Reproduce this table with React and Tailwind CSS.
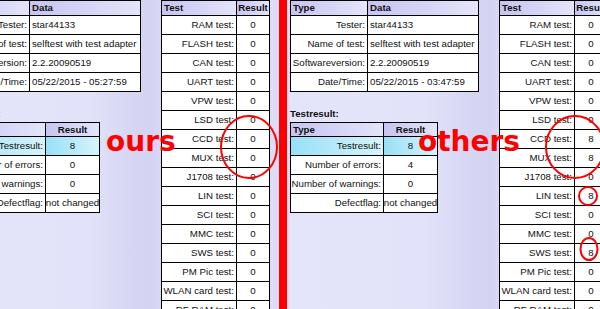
import clsx from "clsx";

const TESTS = [
  "RAM test:",
  "FLASH test:",
  "CAN test:",
  "UART test:",
  "VPW test:",
  "LSD test:",
  "CCD test:",
  "MUX test:",
  "J1708 test:",
  "LIN test:",
  "SCI test:",
  "MMC test:",
  "SWS test:",
  "PM Pic test:",
  "WLAN card test:",
  "RF RAM test:",
];

const ours = {
  time: "05/22/2015 - 05:27:59",
  errors: "0",
  results: TESTS.map(() => "0"),
};

const others = {
  time: "05/22/2015 - 03:47:59",
  errors: "4",
  results: ["0", "0", "0", "0", "0", "0", "8", "8", "0", "8", "0", "0", "8", "0", "0", "0"],
};

const head = "bg-[linear-gradient(90deg,#c7c4f0,#e4e4fb)] font-bold";
const cyan = "bg-[linear-gradient(90deg,#98e0f6,#d6f4fc)]";

function Cell({ className, children }) {
  return (
    <div
      className={clsx(
        "flex h-full shrink-0 items-center overflow-hidden whitespace-nowrap border-r border-black",
        className,
      )}
    >
      {children}
    </div>
  );
}

function Row({ tall, children }) {
  return (
    <div className={clsx("flex border-b border-black", tall ? "h-[19px]" : "h-[15px]")}>
      {children}
    </div>
  );
}

function InfoTable({ time }) {
  const rows = [
    ["Tester:", "star44133"],
    ["Name of test:", "selftest with test adapter"],
    ["Softwareversion:", "2.2.20090519"],
    ["Date/Time:", time],
  ];
  return (
    <div className="w-max border-l border-t border-black bg-white">
      <Row>
        <Cell className={clsx("w-[77px] pl-[2px]", head)}>Type</Cell>
        <Cell className={clsx("w-[111px] pl-[2px]", head)}>Data</Cell>
      </Row>
      {rows.map(([k, v]) => (
        <Row tall key={k}>
          <Cell className="w-[77px] justify-end pr-[2px]">{k}</Cell>
          <Cell className="w-[111px] pl-[2px]">{v}</Cell>
        </Row>
      ))}
    </div>
  );
}

function ResultTable({ errors }) {
  const rows = [
    ["Number of errors:", errors],
    ["Number of warnings:", "0"],
    ["Defectflag:", "not changed"],
  ];
  return (
    <div className="mt-[2px] w-max border-l border-t border-black bg-white">
      <div className="flex h-[14px] border-b border-black">
        <Cell className={clsx("w-[93px] pl-[2px]", head)}>Type</Cell>
        <Cell className={clsx("w-[54px] justify-center", head)}>Result</Cell>
      </div>
      <Row tall>
        <Cell className={clsx("w-[93px] justify-end pr-[2px]", cyan)}>Testresult:</Cell>
        <Cell className={clsx("w-[54px] justify-center", cyan)}>8</Cell>
      </Row>
      {rows.map(([k, v]) => (
        <Row tall key={k}>
          <Cell className="w-[93px] justify-end pr-[2px]">{k}</Cell>
          <Cell className="w-[54px] justify-center">{v}</Cell>
        </Row>
      ))}
    </div>
  );
}

function TestTable({ results }) {
  return (
    <div className="w-max border-l border-t border-black bg-white">
      <Row>
        <Cell className={clsx("w-[75px] pl-[2px]", head)}>Test</Cell>
        <Cell className={clsx("w-[33px] justify-center", head)}>Result</Cell>
      </Row>
      {TESTS.map((t, i) => (
        <Row tall key={t}>
          <Cell className="w-[75px] justify-end pr-[2px]">{t}</Cell>
          <Cell className="w-[33px] justify-center">{results[i]}</Cell>
        </Row>
      ))}
    </div>
  );
}

function Page({ data }) {
  return (
    <div className="flex h-[309px] w-[340px] items-start gap-[21px] bg-[linear-gradient(90deg,#e4e4fa_0px,#e2e2fa_135px,#d6d6f3_180px,#d4d4f2_200px,#dcdcf7_214px)]">
      <div className="w-[188px]">
        <InfoTable time={data.time} />
        <div className="mt-[16px] h-[12px] text-[9.7px] font-bold leading-[12px]">Testresult:</div>
        <ResultTable errors={data.errors} />
      </div>
      <TestTable results={data.results} />
    </div>
  );
}

export default function App() {
  return (
    <div className="relative flex h-[309px] w-[600px] overflow-hidden bg-[#dcdcf7] font-['Liberation_Sans',Arial,sans-serif] text-[9.7px] leading-none text-[#111]">
      <div className="w-[279px] shrink-0 overflow-hidden">
        <div className="-ml-[48px]">
          <Page data={ours} />
        </div>
      </div>
      <div className="w-[8px] shrink-0 bg-[#ff0000]" />
      <div className="flex-1 overflow-hidden bg-[#dcdcf7] pl-[3px]">
        <Page data={others} />
      </div>

      <svg className="pointer-events-none absolute left-0 top-0" width="600" height="309">
        <g fill="none" stroke="#ff0000" strokeWidth="2">
          <ellipse cx="249" cy="147" rx="28" ry="31" />
          <ellipse cx="575" cy="147" rx="29" ry="31" />
          <ellipse cx="588" cy="196" rx="9" ry="9" />
          <ellipse cx="589" cy="249" rx="8.5" ry="11" />
        </g>
      </svg>
      <span className="absolute left-[106px] top-[128px] font-['DejaVu_Sans',sans-serif] text-[28px] font-bold leading-none text-[#ff0000]">
        ours
      </span>
      <span className="absolute left-[418px] top-[128px] font-['DejaVu_Sans',sans-serif] text-[28px] font-bold leading-none text-[#ff0000]">
        others
      </span>
    </div>
  );
}
